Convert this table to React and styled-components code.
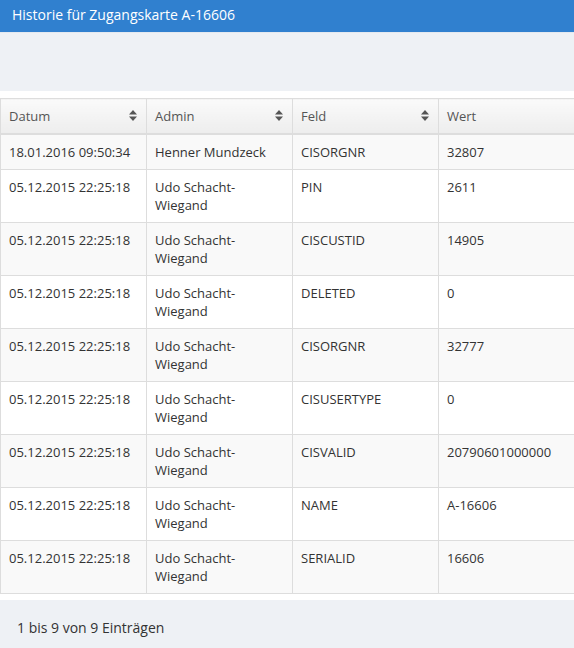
import styled, {createGlobalStyle} from "styled-components";

const GlobalStyle = createGlobalStyle`
  html, body {
    margin: 0;
    padding: 0;
    background: #fff;
    font-family: "Open Sans", "Liberation Sans", sans-serif;
  }
`;

const columns = [
  {key: "datum", label: "Datum", sortable: true},
  {key: "admin", label: "Admin", sortable: true},
  {key: "feld", label: "Feld", sortable: true},
  {key: "wert", label: "Wert", sortable: false},
];

const rows = [
  {datum: "18.01.2016 09:50:34", admin: "Henner Mundzeck", feld: "CISORGNR", wert: "32807"},
  {datum: "05.12.2015 22:25:18", admin: "Udo Schacht-Wiegand", feld: "PIN", wert: "2611"},
  {datum: "05.12.2015 22:25:18", admin: "Udo Schacht-Wiegand", feld: "CISCUSTID", wert: "14905"},
  {datum: "05.12.2015 22:25:18", admin: "Udo Schacht-Wiegand", feld: "DELETED", wert: "0"},
  {datum: "05.12.2015 22:25:18", admin: "Udo Schacht-Wiegand", feld: "CISORGNR", wert: "32777"},
  {datum: "05.12.2015 22:25:18", admin: "Udo Schacht-Wiegand", feld: "CISUSERTYPE", wert: "0"},
  {datum: "05.12.2015 22:25:18", admin: "Udo Schacht-Wiegand", feld: "CISVALID", wert: "20790601000000"},
  {datum: "05.12.2015 22:25:18", admin: "Udo Schacht-Wiegand", feld: "NAME", wert: "A-16606"},
  {datum: "05.12.2015 22:25:18", admin: "Udo Schacht-Wiegand", feld: "SERIALID", wert: "16606"},
];

function SortIcon() {
  return (
    <svg width="8" height="11" viewBox="0 0 8 11">
      <path d="M4 0 L8 4.4 L0 4.4 Z" fill="#555"/>
      <path d="M4 11 L8 6.6 L0 6.6 Z" fill="#555"/>
    </svg>
  );
}

export default function App() {
  return (
    <>
      <GlobalStyle/>
      <Page>
        <TitleBar>Historie für Zugangskarte A-16606</TitleBar>
        <Toolbar/>
        <TableFrame>
          <Table>
            <colgroup>
              <col style={{width: 146}}/>
              <col style={{width: 146}}/>
              <col style={{width: 146}}/>
              <col/>
            </colgroup>
            <thead>
              <tr>
                {columns.map(col => (
                  <HeadCell key={col.key}>
                    <HeadInner>
                      {col.label}
                      {col.sortable && <SortIcon/>}
                    </HeadInner>
                  </HeadCell>
                ))}
              </tr>
            </thead>
            <tbody>
              {rows.map((row, i) => (
                <Row key={i} striped={i % 2 === 0}>
                  {columns.map(col => (
                    <Cell key={col.key}>{row[col.key]}</Cell>
                  ))}
                </Row>
              ))}
            </tbody>
          </Table>
        </TableFrame>
        <Footer>1 bis 9 von 9 Einträgen</Footer>
      </Page>
    </>
  );
}

const Page = styled.div`
  width: 574px;
  height: 648px;
  overflow: hidden;
  display: flex;
  flex-direction: column;
`;

const TitleBar = styled.div`
  height: 33px;
  box-sizing: border-box;
  padding: 5px 12px 0;
  background: #3080cf;
  color: #fff;
  font-size: 14px;
  line-height: 20px;
  border-bottom: 1px solid #e4e9ef;
`;

const Toolbar = styled.div`
  height: 58px;
  background: #eef1f5;
`;

const TableFrame = styled.div`
  margin-top: 7px;
  overflow: hidden;
`;

const Table = styled.table`
  width: 620px;
  table-layout: fixed;
  border-collapse: collapse;
  font-size: 13px;
  color: #333;
`;

const HeadCell = styled.th`
  height: 35px;
  box-sizing: border-box;
  padding: 0 8px;
  text-align: left;
  font-weight: 400;
  color: #555;
  border: 1px solid #ddd;
  border-bottom: 2px solid #ddd;
  background: linear-gradient(to bottom, #fafafa 0%, #ededed 100%);
`;

const HeadInner = styled.div`
  display: flex;
  align-items: center;
  justify-content: space-between;
  line-height: 18px;
  padding-right: 1px;
`;

const Row = styled.tr`
  background: ${({striped}) => striped ? "#f9f9f9" : "#fff"};
`;

const Cell = styled.td`
  padding: 8px;
  line-height: 18px;
  vertical-align: top;
  border: 1px solid #ddd;
  word-wrap: break-word;
`;

const Footer = styled.div`
  margin-top: 6px;
  flex: 1;
  background: #eef1f5;
  padding: 18px 17px 0;
  font-size: 14px;
  line-height: 20px;
  color: #333;
`;
